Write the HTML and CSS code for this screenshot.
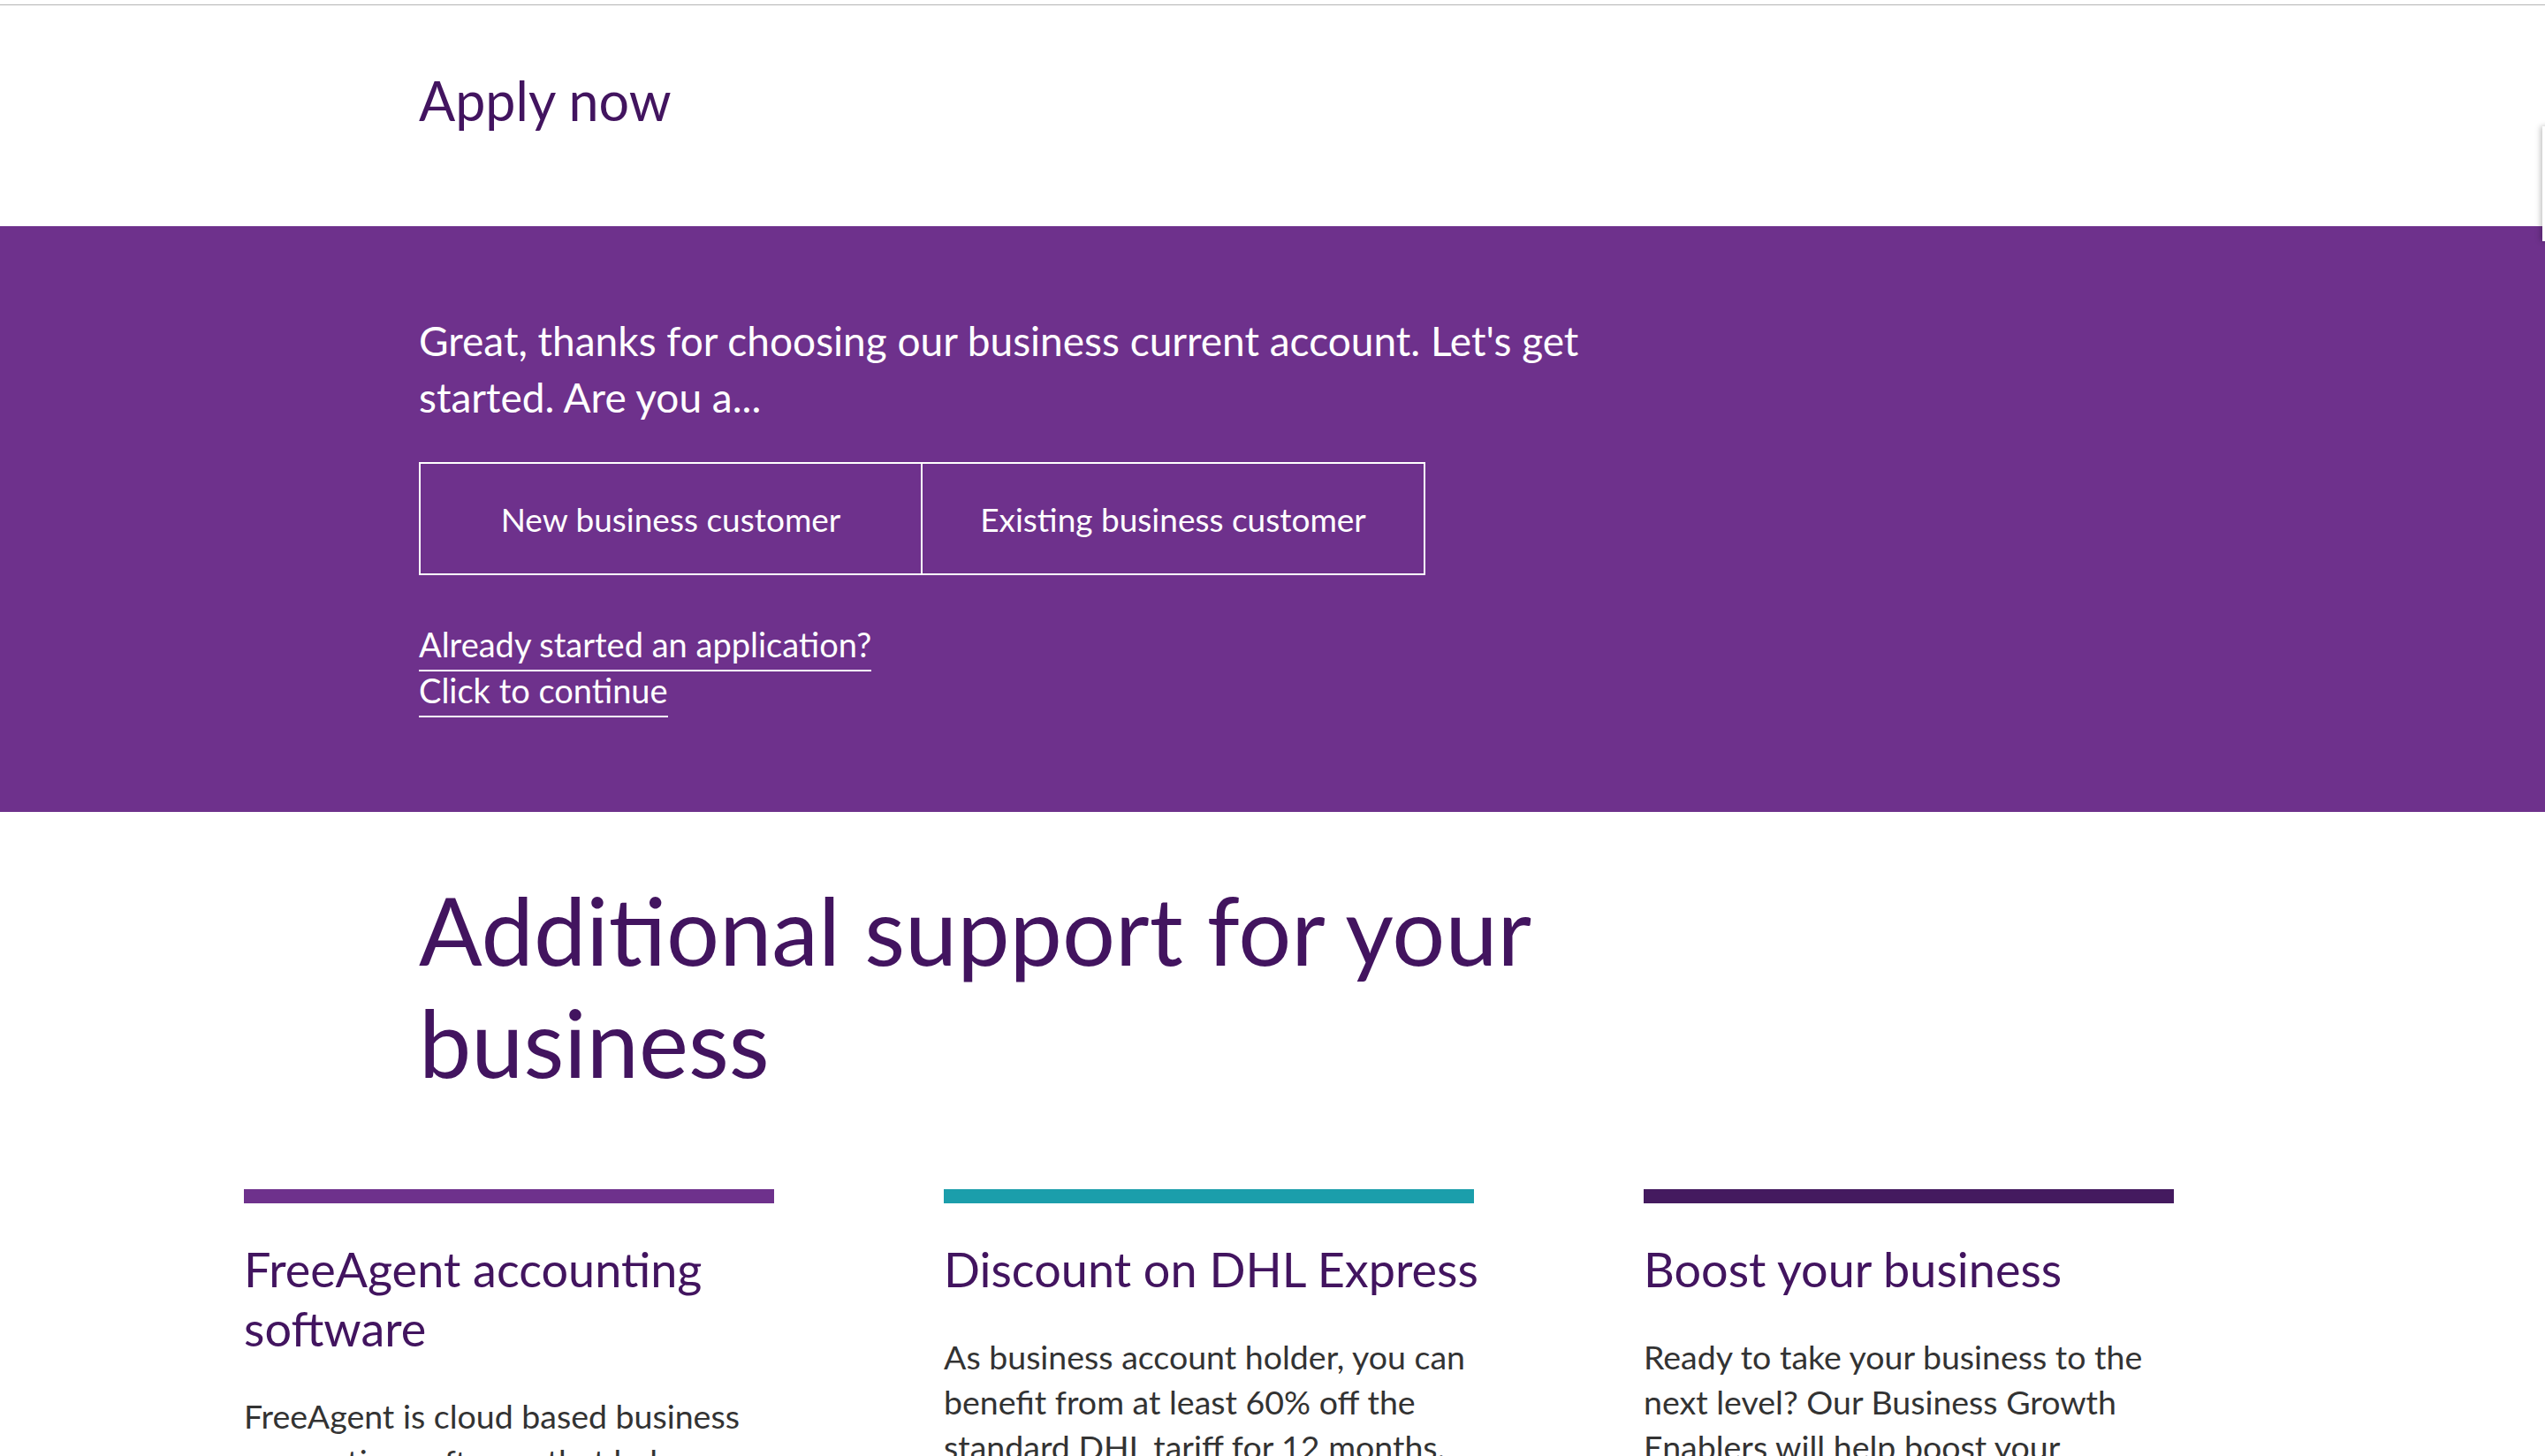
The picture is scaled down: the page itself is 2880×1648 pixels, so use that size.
FILE: index.html
```html
<!DOCTYPE html>
<html lang="en">
<head>
<meta charset="utf-8">
<title>Apply now</title>
<link rel="stylesheet" href="styles.css">
</head>
<body>
<div class="topline"></div>
<header class="apply">
  <div class="wrap inset">
    <h1 class="apply-title">Apply now</h1>
  </div>
</header>
<section class="band">
  <div class="wrap inset">
    <p class="intro">Great, thanks for choosing our business current account. Let's get started. Are you a...</p>
    <div class="choices">
      <a class="choice choice-new" href="#">New business customer</a>
      <a class="choice choice-existing" href="#">Existing business customer</a>
    </div>
    <p class="resume"><a href="#">Already started an application?</a><br><a href="#">Click to continue</a></p>
  </div>
</section>
<section class="support">
  <div class="wrap inset">
    <h2 class="support-title">Additional support for your business</h2>
  </div>
  <div class="wrap cards">
    <article class="card">
      <div class="bar bar-purple"></div>
      <h3 class="card-title">FreeAgent accounting software</h3>
      <p class="card-text">FreeAgent is cloud based business accounting software that helps you manage your finances in one place.</p>
    </article>
    <article class="card">
      <div class="bar bar-teal"></div>
      <h3 class="card-title">Discount on DHL Express</h3>
      <p class="card-text">As business account holder, you can benefit from at least 60% off the standard DHL tariff for 12 months.</p>
    </article>
    <article class="card">
      <div class="bar bar-dark"></div>
      <h3 class="card-title">Boost your business</h3>
      <p class="card-text">Ready to take your business to the next level? Our Business Growth Enablers will help boost your business.</p>
    </article>
  </div>
</section>
<div class="side-tab"></div>
</body>
</html>
```
FILE: styles.css
```css
html, body {
  margin: 0;
  padding: 0;
  background: #ffffff;
}
body {
  font-family: Lato, "Open Sans", sans-serif;
  color: #333333;
  overflow: hidden;
}
.topline {
  height: 5px;
  border-bottom: 1px solid #b5b5b5;
}
.wrap {
  width: 2328px;
  margin: 0 auto;
  box-sizing: border-box;
}
.inset {
  padding-left: 198px;
}
.apply {
  padding: 71px 0 106px;
}
.apply-title {
  margin: 0;
  font-size: 61px;
  line-height: 1.2;
  font-weight: 400;
  color: #42145f;
}
.band {
  background: #6e318c;
  color: #ffffff;
  padding: 98px 0 112px;
}
.intro {
  margin: 0;
  max-width: 1400px;
  font-size: 46px;
  line-height: 64px;
}
.choices {
  display: flex;
  width: max-content;
  margin-top: 41px;
  border: 2px solid #ffffff;
}
.choice {
  display: flex;
  align-items: center;
  justify-content: center;
  height: 124px;
  color: #ffffff;
  text-decoration: none;
  font-size: 37px;
  box-sizing: border-box;
}
.choice-new {
  width: 566px;
}
.choice-existing {
  width: 569px;
  border-left: 2px solid #ffffff;
}
.resume {
  margin: 52px 0 0;
  font-size: 38px;
  line-height: 52px;
}
.resume a {
  color: #ffffff;
  text-decoration: none;
  border-bottom: 2px solid #ffffff;
  padding-bottom: 6px;
}
.support {
  padding-top: 70px;
}
.support-title {
  margin: 0;
  max-width: 1440px;
  font-size: 106px;
  line-height: 127px;
  font-weight: 400;
  color: #42145f;
}
.cards {
  display: flex;
  gap: 172px;
  margin-top: 103px;
}
.card {
  width: 620px;
  flex: none;
}
.bar {
  width: 600px;
  height: 16px;
}
.bar-purple { background: #6e318c; }
.bar-teal { background: #1b9eab; }
.bar-dark { background: #441a5f; }
.card-title {
  margin: 41px 0 40px;
  font-size: 54px;
  line-height: 67px;
  font-weight: 400;
  color: #42145f;
}
.card-text {
  margin: 0;
  font-size: 37.5px;
  line-height: 51px;
  color: #333333;
}
.side-tab {
  position: absolute;
  top: 143px;
  left: 2877px;
  width: 40px;
  height: 130px;
  background: #ffffff;
  box-shadow: -2px 0 6px rgba(0, 0, 0, 0.25);
}
```
